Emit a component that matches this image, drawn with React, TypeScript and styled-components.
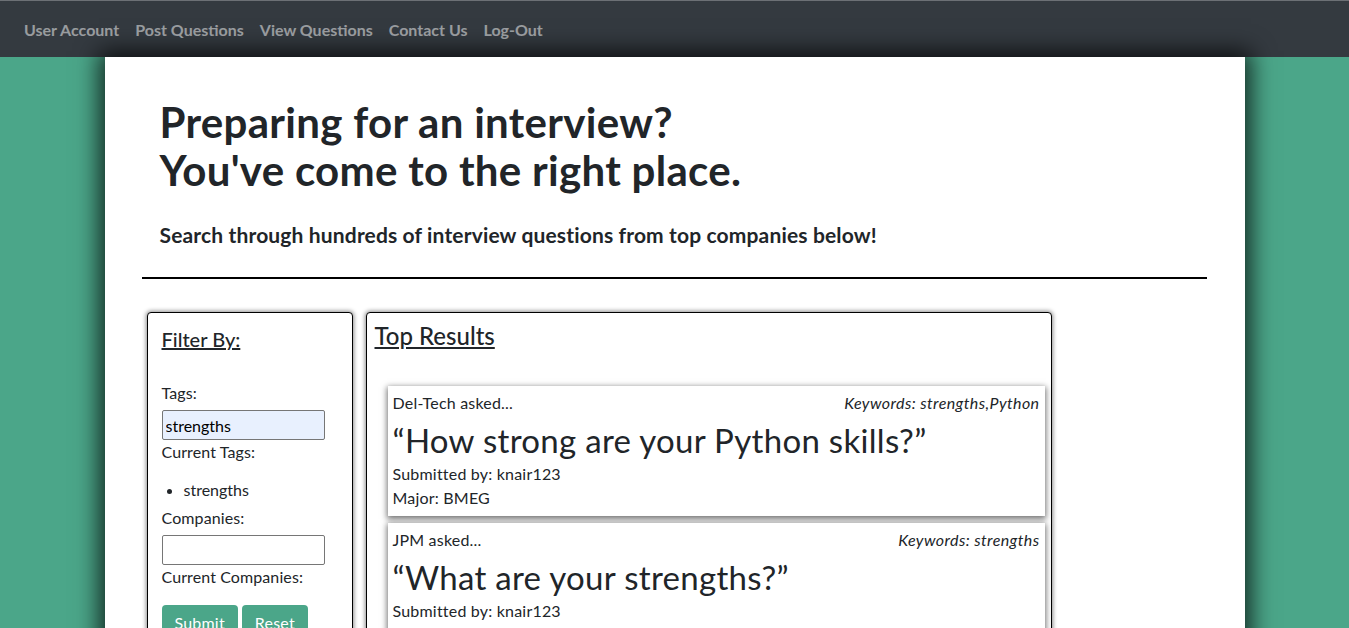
import styled, { createGlobalStyle } from "styled-components"

const GlobalStyle = createGlobalStyle`
  * { box-sizing: border-box; }
  body {
    margin: 0;
    background: #4ba689;
    font-family: 'Lato', 'Noto Sans', sans-serif;
    color: #212529;
    overflow: hidden;
  }
`

type Question = {
  company: string
  keywords: string
  text: string
  user: string
  major: string
}

const questions: Question[] = [
  { company: "Del-Tech", keywords: "strengths,Python", text: "How strong are your Python skills?", user: "knair123", major: "BMEG" },
  { company: "JPM", keywords: "strengths", text: "What are your strengths?", user: "knair123", major: "BMEG" },
]

const navLinks = ["User Account", "Post Questions", "View Questions", "Contact Us", "Log-Out"]

export default function App() {
  return (
    <>
      <GlobalStyle />
      <Navbar>
        {navLinks.map((l) => (
          <NavLink key={l} href="#">{l}</NavLink>
        ))}
      </Navbar>
      <Main>
        <Hero>
          <Headline>
            Preparing for an interview?
            <br />
            You've come to the right place.
          </Headline>
          <Lead>Search through hundreds of interview questions from top companies below!</Lead>
        </Hero>
        <Divider />
        <Row>
          <FilterBox>
            <BoxTitle>Filter By:</BoxTitle>
            <Label>Tags:</Label>
            <Input defaultValue="strengths" $filled />
            <Label>Current Tags:</Label>
            <TagList>
              <li>strengths</li>
            </TagList>
            <Label>Companies:</Label>
            <Input />
            <Label>Current Companies:</Label>
            <Buttons>
              <Button>Submit</Button>
              <Button>Reset</Button>
            </Buttons>
          </FilterBox>
          <ResultsBox>
            <ResultsTitle>Top Results</ResultsTitle>
            <Cards>
              {questions.map((q) => (
                <Card key={q.text}>
                  <CardTop>
                    <span>{q.company} asked...</span>
                    <Keywords>Keywords: {q.keywords}</Keywords>
                  </CardTop>
                  <QuestionText>“{q.text}”</QuestionText>
                  <Meta>Submitted by: {q.user}</Meta>
                  <Meta>Major: {q.major}</Meta>
                </Card>
              ))}
            </Cards>
          </ResultsBox>
        </Row>
      </Main>
    </>
  )
}

const Navbar = styled.nav`
  height: 57px;
  background: #343a40;
  border-top: 1px solid #6c7075;
  display: flex;
  align-items: center;
  padding: 0 16px;
`

const NavLink = styled.a`
  padding: 8px;
  color: rgba(255, 255, 255, 0.5);
  font-size: 16px;
  font-weight: 700;
  text-decoration: none;
`

const Main = styled.main`
  width: 1140px;
  margin: 0 auto;
  min-height: 700px;
  background: #fff;
  box-shadow: 0 0 22px 6px rgba(0, 0, 0, 0.75);
  padding: 0 38px 0 37px;
`

const Hero = styled.div`
  padding: 41px 18px 30px;
`

const Headline = styled.h1`
  margin: 0 0 29px;
  font-size: 42px;
  font-weight: 700;
  letter-spacing: 0.3px;
  line-height: 48px;
`

const Lead = styled.h5`
  margin: 0;
  font-size: 21px;
  font-weight: 700;
  letter-spacing: 0.15px;
  line-height: 24px;
`

const Divider = styled.hr`
  margin: 0;
  border: none;
  border-top: 2px solid #000;
`

const Row = styled.div`
  display: flex;
  gap: 13px;
  padding: 33px 0 0 5px;
`

const Box = styled.div`
  border: 1px solid #000;
  border-radius: 4px;
  box-shadow: 0 0 4px 1px rgba(0, 0, 0, 0.45);
  background: #fff;
  height: 340px;
`

const FilterBox = styled(Box)`
  width: 206px;
  padding: 12px 14px;
`

const BoxTitle = styled.h5`
  margin: 0 0 28px;
  font-size: 20px;
  font-weight: 500;
  text-decoration: underline;
  line-height: 28px;
`

const Label = styled.div`
  font-size: 16px;
  line-height: 24px;
  letter-spacing: 0.1px;
`

const Input = styled.input<{ $filled?: boolean }>`
  display: block;
  width: 163px;
  height: 30px;
  margin: 5px 0 0;
  padding: 1px 3px;
  border: 1px solid #767676;
  border-radius: 2px;
  background: ${(p) => (p.$filled ? "#e8f0fe" : "#fff")};
  font-family: inherit;
  font-size: 16px;
  color: #000;
`

const TagList = styled.ul`
  margin: 14px 0 4px;
  padding-left: 22px;
  font-size: 16px;
  line-height: 24px;
`

const Buttons = styled.div`
  display: flex;
  gap: 4px;
  margin-top: 16px;
`

const Button = styled.button`
  background: #4ba689;
  color: #fff;
  border: none;
  border-radius: 4px;
  font-family: inherit;
  font-size: 16px;
  letter-spacing: 0.2px;
  padding: 8px 13px;
`

const ResultsBox = styled(Box)`
  width: 686px;
  padding: 6px 6px 0 8px;
`

const ResultsTitle = styled.h4`
  margin: 0 0 34px;
  font-size: 24px;
  font-weight: 500;
  text-decoration: underline;
  line-height: 33px;
`

const Cards = styled.div`
  display: flex;
  flex-direction: column;
  gap: 7px;
  padding-left: 13px;
`

const Card = styled.div`
  background: #fff;
  box-shadow: 0 2px 6px 1px rgba(0, 0, 0, 0.55);
  padding: 6px 5px 6px;
`

const CardTop = styled.div`
  display: flex;
  justify-content: space-between;
  font-size: 16px;
  letter-spacing: 0.2px;
  line-height: 22px;
`

const Keywords = styled.span`
  font-style: italic;
  letter-spacing: 0.4px;
`

const QuestionText = styled.div`
  font-size: 33px;
  letter-spacing: 0.3px;
  line-height: 44px;
  margin: 4px 0 0;
`

const Meta = styled.div`
  font-size: 16px;
  letter-spacing: 0.2px;
  line-height: 24px;
`
